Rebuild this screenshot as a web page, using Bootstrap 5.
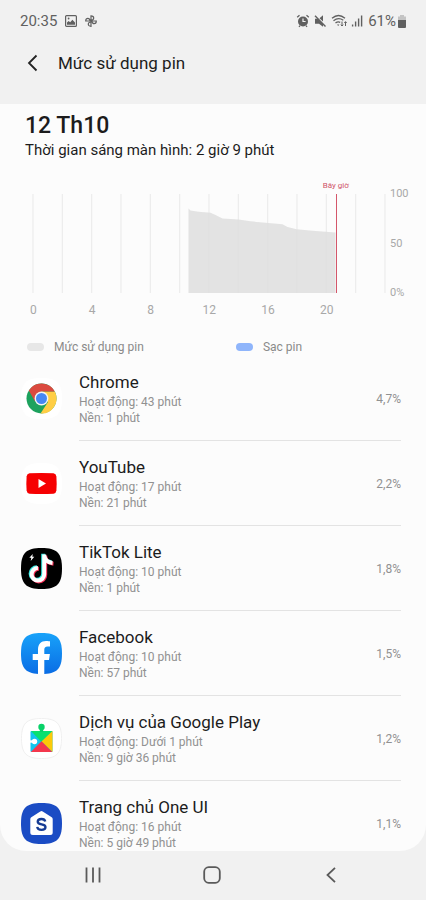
<!DOCTYPE html>
<html lang="vi">
<head>
<meta charset="utf-8">
<meta name="viewport" content="width=device-width, initial-scale=1">
<title>Mức sử dụng pin</title>
<link href="https://cdn.jsdelivr.net/npm/bootstrap@5.3.0/dist/css/bootstrap.min.css" rel="stylesheet">
<style>
body{font-family:Roboto,"Noto Sans",sans-serif;background:#f1f1f1;color:#1c1c1c}
svg{display:block;flex:none}
.statusbar{height:42px;padding:0 20px;color:#606060;font-size:15px}
.battery{margin-left:2px}
.titlebar{height:62px;padding:0 20px 20px 20px}
.titlebar h1{font-size:17px;line-height:24px}
.plain-btn{background:none;border:0;padding:0;color:#222}
.panel{background:#fcfcfc;border-radius:0 0 26px 26px;overflow-y:auto;min-height:0;scrollbar-width:none}
.panel::-webkit-scrollbar{display:none}
.summary{padding:8px 25px 0}
.summary h2{font-size:23px;line-height:28px;font-weight:500}
.summary p{font-size:15px;line-height:20px}
.chart-row{padding:34px 0 0 33px}
.plot{height:99px}
.plot svg{width:100%;height:100%;overflow:visible}
.now-tag{font-size:8px;line-height:10px;color:#cf5468;bottom:100%;left:86%;margin-bottom:3px;white-space:nowrap}
.now-line{width:1px;background:#d4566a;left:86%}
.y-axis{width:41px;margin:-8px 0;padding-left:5px;font-size:11px;line-height:16px;color:#a8a8a8}
.x-axis{margin:9px 70px 0 4px;font-size:12px;line-height:16px;color:#a8a8a8}
.legend-row{padding:20px 26px 0 27px;font-size:12px;line-height:18px;color:#8a8a8a}
.legend-first{width:56%}
.swatch{width:17px;height:8px;border-radius:4px;margin-right:10px}
.swatch-use{background:#e7e7e7}
.swatch-charge{background:#8fb5fb}
.app-row{padding:0 25px 0 21px}
.app-body{margin-left:17px;padding:14px 0 13px;border-bottom:1px solid #e3e3e3}
.app-row:last-child .app-body{border-bottom:0}
.app-body h3{font-size:17px;line-height:24px}
.app-body p{font-size:12px;line-height:16px;color:#919191}
.app-body p+p{line-height:17px}
.share{font-size:12px;line-height:16px;color:#919191}
.softkeys{height:50px;padding:0 35px 0 33px;color:#555}
</style>
</head>
<body class="vh-100 d-flex flex-column overflow-hidden">
<header>
  <div class="statusbar d-flex align-items-center justify-content-between">
    <div class="d-flex align-items-center gap-2">
      <span>20:35</span>
      <svg width="12" height="12" viewBox="0 0 12 12" aria-hidden="true"><rect x=".6" y=".6" width="10.800" height="10.800" rx="1" fill="none" stroke="currentColor" stroke-width="1.200"/><path d="M2 9.800V7.600l1.600-1.700 1.600 1.400 2.200-2.600L10 7.600v2.200z" fill="currentColor"/><circle cx="3.600" cy="3.500" r=".9" fill="currentColor"/></svg>
      <svg width="12" height="12" viewBox="0 0 12 12" fill="none" stroke="currentColor" stroke-width="1.200" aria-hidden="true"><path d="M6 6V.8c3.600 0 3.600 4.200 0 4.200M6 6h5.300c0 3.600-4.300 3.600-4.300 0M6 6v5.300c-3.600 0-3.600-4.300 0-4.300M6 6H.7c0-3.600 4.300-3.600 4.300 0"/></svg>
    </div>
    <div class="d-flex align-items-center">
      <svg width="72" height="14" viewBox="0 0 72 14" fill="none" stroke="currentColor" aria-hidden="true">
        <circle cx="7" cy="7.500" r="5" fill="currentColor" stroke="none"/><path d="M7 4.500v3h2.600" stroke="#f1f1f1" stroke-width="1.200"/><path d="M1.200 3.200l2.300-1.900M12.800 3.200l-2.300-1.900M3 12.800l1-1.200M11 12.800l-1-1.200" stroke-width="1.300"/>
        <path d="M19 4.800h2.500l5.500 5.500v2.500L23 9.800h-4zM23.500 4.300L27 1.300v6.200z" fill="currentColor" stroke="none"/><path d="M19 1.800L29.500 12.500" stroke-width="1.400"/>
        <path d="M36 4.200c4-3.300 9-3.300 13 0M37.500 6.700c3.200-2.500 6.800-2.500 9.800-.5M39.500 9c1.800-1.400 3.400-1.400 4.700-.6" stroke-width="1.300"/><path d="M41 10.500h2.400L42.200 12z" fill="currentColor" stroke="none"/><path d="M46 7.500v4.500m-1.200-1.300L46 12l1.200-1.300M49.500 12V7.700m-1.200 1.300l1.200-1.300L50.700 9"/>
        <path d="M56.600 10.500v2M59.600 7.500v5M62.600 4.500v8M65.600 1.500v11" stroke-width="1.400"/>
      </svg>
      <span>61%</span>
      <svg class="battery" width="8" height="13" viewBox="0 0 8 13" aria-hidden="true"><path d="M2 0h4v1.500h2V6H0V1.500h2z" fill="#c4c4c4"/><path d="M0 5h8v7a1 1 0 0 1-1 1H1a1 1 0 0 1-1-1z" fill="currentColor"/></svg>
    </div>
  </div>
  <div class="titlebar d-flex align-items-center">
    <button class="plain-btn" type="button" aria-label="Quay lại"><svg width="22" height="22" viewBox="0 0 22 22" fill="none" stroke="currentColor" stroke-width="1.800"><path d="M16.500 3.500L9 11l7.500 7.500"/></svg></button>
    <h1 class="fw-normal mb-0 ms-3">Mức sử dụng pin</h1>
  </div>
</header>

<main class="panel flex-fill">
  <section class="summary">
    <h2 class="mb-0">12 Th10</h2>
    <p class="mb-0">Thời gian sáng màn hình: 2 giờ 9 phút</p>
  </section>

  <section aria-label="Biểu đồ pin">
    <div class="chart-row d-flex">
      <div class="plot flex-fill position-relative">
        <svg viewBox="0 0 352 99" preserveAspectRatio="none" aria-hidden="true">
          <path d="M0 0V99M29.300 0V99M58.700 0V99M88 0V99M117.300 0V99M146.700 0V99M176 0V99M205.300 0V99M234.700 0V99M264 0V99M293.300 0V99M322.700 0V99M352 0V99" stroke="#e9e9e9" fill="none"/>
          <path d="M155.500 99V14.500l2 2 8 1.300 12 .9 5 2.300 7 3.400 16 1.200 12 1.700 15 1.500 17 1.400 5 2.800 9 2.200 16 1.600 23 1.800V99z" fill="#dedede" fill-opacity=".86"/>
        </svg>
        <span class="now-line position-absolute top-0 bottom-0"></span>
        <span class="now-tag position-absolute translate-middle-x">Bây giờ</span>
      </div>
      <div class="y-axis d-flex flex-column justify-content-between"><span>100</span><span>50</span><span>0%</span></div>
    </div>
    <div class="x-axis row g-0 text-center"><span class="col">0</span><span class="col">4</span><span class="col">8</span><span class="col">12</span><span class="col">16</span><span class="col">20</span></div>
    <div class="legend-row d-flex">
      <div class="legend-first d-flex align-items-center"><span class="swatch swatch-use"></span>Mức sử dụng pin</div>
      <div class="d-flex align-items-center"><span class="swatch swatch-charge"></span>Sạc pin</div>
    </div>
  </section>

  <section aria-label="Ứng dụng">
    <article class="app-row d-flex align-items-center">
      <svg width="41" height="41" viewBox="0 0 41 41" aria-hidden="true"><path d="M20.500 0C36 0 41 5 41 20.500S36 41 20.500 41 0 36 0 20.500 5 0 20.500 0z" fill="#fff"/><circle cx="20.500" cy="20.500" r="15" fill="#1da25e"/><path d="M20.500 13.500h13.300A15 15 0 0 1 19.500 35.500L27 24z" fill="#ffce45"/><path d="M7.800 12.500A15 15 0 0 1 33.800 13.500H20.500L14 18v5.500z" fill="#db4a3f"/><circle cx="20.500" cy="20.500" r="6.900" fill="#f4f4f4"/><circle cx="20.500" cy="20.500" r="5.500" fill="#4687f4"/></svg>
      <div class="app-body flex-fill d-flex align-items-center justify-content-between"><div><h3 class="fw-normal mb-0">Chrome</h3><p class="mb-0">Hoạt động: 43 phút</p><p class="mb-0">Nền: 1 phút</p></div><span class="share">4,7%</span></div>
    </article>
    <article class="app-row d-flex align-items-center">
      <svg width="41" height="41" viewBox="0 0 41 41" aria-hidden="true"><path d="M20.500 0C36 0 41 5 41 20.500S36 41 20.500 41 0 36 0 20.500 5 0 20.500 0z" fill="#fff"/><path d="M8.500 10.300q12-.8 24 0 2.600.4 2.900 3.200.5 7 0 14-.3 2.800-2.900 3.200-12 .8-24 0-2.600-.4-2.900-3.200-.5-7 0-14 .3-2.800 2.900-3.200z" fill="#f60002"/><path d="M17.500 16v9l7.500-4.500z" fill="#fff"/></svg>
      <div class="app-body flex-fill d-flex align-items-center justify-content-between"><div><h3 class="fw-normal mb-0">YouTube</h3><p class="mb-0">Hoạt động: 17 phút</p><p class="mb-0">Nền: 21 phút</p></div><span class="share">2,2%</span></div>
    </article>
    <article class="app-row d-flex align-items-center">
      <svg width="41" height="41" viewBox="0 0 41 41" aria-hidden="true"><path d="M20.500 0C36 0 41 5 41 20.500S36 41 20.500 41 0 36 0 20.500 5 0 20.500 0z" fill="#000"/><g fill="none" stroke-width="4"><path d="M22.200 5.800v19.700a6.300 6.300 0 1 1-6.300-6.300M22.200 6.500c.5 4.500 3.700 7.300 8.300 7.700" stroke="#35e8e2"/><path d="M24.200 7.400v19.700a6.300 6.300 0 1 1-6.300-6.300M24.200 8.100c.5 4.500 3.700 7.300 8.300 7.700" stroke="#f92d55"/><path d="M23.200 6.600v19.700a6.300 6.300 0 1 1-6.300-6.300M23.200 7.300c.5 4.500 3.700 7.300 8.300 7.700" stroke="#fff"/></g><path d="M11.800 6L8.300 9.800h2L9.700 13l3.600-4.200h-2z" fill="#fff"/></svg>
      <div class="app-body flex-fill d-flex align-items-center justify-content-between"><div><h3 class="fw-normal mb-0">TikTok Lite</h3><p class="mb-0">Hoạt động: 10 phút</p><p class="mb-0">Nền: 1 phút</p></div><span class="share">1,8%</span></div>
    </article>
    <article class="app-row d-flex align-items-center">
      <svg width="41" height="41" viewBox="0 0 41 41" aria-hidden="true"><defs><linearGradient id="fb" x2="0" y2="1"><stop stop-color="#18a2f9"/><stop offset="1" stop-color="#0a6de5"/></linearGradient></defs><path d="M20.500 0C36 0 41 5 41 20.500S36 41 20.500 41 0 36 0 20.500 5 0 20.500 0z" fill="url(#fb)"/><path d="M17 41V27h-5.300v-6H17v-4.300c0-5.700 3-8.700 8-8.700 2 0 4 .3 4 .3v5.200h-2.400c-2.500 0-3.300 1.500-3.300 3.200V21h5.600l-.9 6h-4.700v13.900c-2 .1-4.300.1-6.300.1z" fill="#fff"/></svg>
      <div class="app-body flex-fill d-flex align-items-center justify-content-between"><div><h3 class="fw-normal mb-0">Facebook</h3><p class="mb-0">Hoạt động: 10 phút</p><p class="mb-0">Nền: 57 phút</p></div><span class="share">1,5%</span></div>
    </article>
    <article class="app-row d-flex align-items-center">
      <svg width="41" height="41" viewBox="0 0 41 41" aria-hidden="true"><path d="M20.500.5C35.500.5 40.500 5.500 40.500 20.500s-5 20-20 20-20-5-20-20 5-20 20-20z" fill="#fff" stroke="#f0f0f0"/><rect x="9.500" y="13" width="22" height="21" rx="1" fill="#12c5ee"/><path d="M10 13h21.500L20.500 24z" fill="#09e06f"/><circle cx="20.500" cy="9" r="3.200" fill="#09d269"/><path d="M18.800 10h3.400v4h-3.400z" fill="#09d269"/><path d="M31.500 13v21L20.500 23.500z" fill="#fcca09"/><path d="M9.800 34L20.500 23.300 31.200 34z" fill="#f4384d"/><circle cx="13.500" cy="23.500" r="2.700" fill="#fff"/><path d="M9 22.300h4v2.400H9z" fill="#fff"/></svg>
      <div class="app-body flex-fill d-flex align-items-center justify-content-between"><div><h3 class="fw-normal mb-0">Dịch vụ của Google Play</h3><p class="mb-0">Hoạt động: Dưới 1 phút</p><p class="mb-0">Nền: 9 giờ 36 phút</p></div><span class="share">1,2%</span></div>
    </article>
    <article class="app-row d-flex align-items-center">
      <svg width="41" height="41" viewBox="0 0 41 41" aria-hidden="true"><path d="M20.500 0C36 0 41 5 41 20.500S36 41 20.500 41 0 36 0 20.500 5 0 20.500 0z" fill="#1b4cc4"/><path d="M9.300 16.200q0-1.200 1-1.900l9-5.800q1.200-.8 2.400 0l9 5.800q1 .7 1 1.900V29.500q0 2.500-2.500 2.500H11.800q-2.500 0-2.500-2.500z" fill="#fff"/><path d="M24.300 18.500c-.4-1.700-1.900-2.500-3.800-2.500-2.300 0-3.800 1.100-3.800 2.800 0 3.800 7.800 1.500 7.800 5.200 0 1.800-1.700 2.900-4 2.900s-4-1-4.300-3" fill="none" stroke="#153b94" stroke-width="2.300"/></svg>
      <div class="app-body flex-fill d-flex align-items-center justify-content-between"><div><h3 class="fw-normal mb-0">Trang chủ One UI</h3><p class="mb-0">Hoạt động: 16 phút</p><p class="mb-0">Nền: 5 giờ 49 phút</p></div><span class="share">1,1%</span></div>
    </article>
  </section>
</main>

<nav class="softkeys d-flex align-items-center" aria-label="Điều hướng">
  <button class="plain-btn flex-fill" type="button" aria-label="Gần đây"><svg class="mx-auto" width="18" height="18" viewBox="0 0 18 18" stroke="#5a5a5a" stroke-width="1.800"><path d="M2.500 1.500v15M9 1.500v15M15.500 1.500v15"/></svg></button>
  <button class="plain-btn flex-fill" type="button" aria-label="Màn hình chính"><svg class="mx-auto" width="18" height="18" viewBox="0 0 18 18" fill="none" stroke="#5a5a5a" stroke-width="1.800"><rect x="1.200" y="1.200" width="15.600" height="15.600" rx="4.500"/></svg></button>
  <button class="plain-btn flex-fill" type="button" aria-label="Trở về"><svg class="mx-auto" width="18" height="18" viewBox="0 0 18 18" fill="none" stroke="#5a5a5a" stroke-width="1.800"><path d="M13 1.800L5.500 9l7.500 7.200"/></svg></button>
</nav>
<script src="https://cdn.jsdelivr.net/npm/bootstrap@5.3.0/dist/js/bootstrap.bundle.min.js"></script>
</body>
</html>
